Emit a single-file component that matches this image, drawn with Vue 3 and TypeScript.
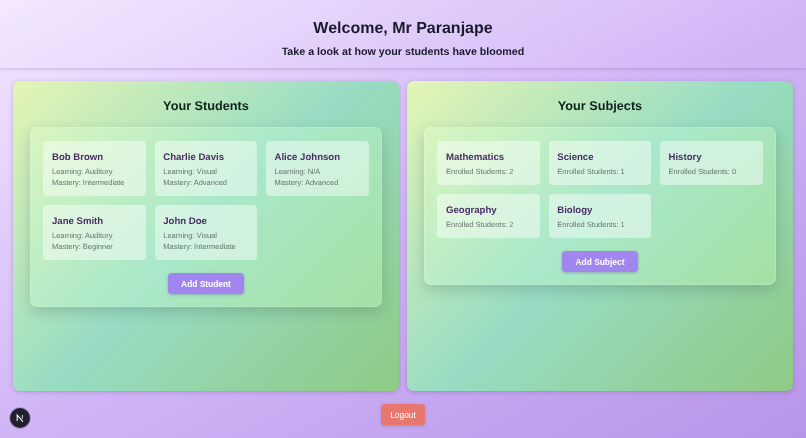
<script setup lang="ts">
const students = [
  { name: 'Bob Brown', learning: 'Auditory', mastery: 'Intermediate' },
  { name: 'Charlie Davis', learning: 'Visual', mastery: 'Advanced' },
  { name: 'Alice Johnson', learning: 'N/A', mastery: 'Advanced' },
  { name: 'Jane Smith', learning: 'Auditory', mastery: 'Beginner' },
  { name: 'John Doe', learning: 'Visual', mastery: 'Intermediate' },
]

const subjects = [
  { name: 'Mathematics', enrolled: 2 },
  { name: 'Science', enrolled: 1 },
  { name: 'History', enrolled: 0 },
  { name: 'Geography', enrolled: 2 },
  { name: 'Biology', enrolled: 1 },
]
</script>

<template>
  <div class="page">
    <header class="header">
      <h1>Welcome, Mr Paranjape</h1>
      <p>Take a look at how your students have bloomed</p>
    </header>

    <main class="columns">
      <section class="panel">
        <h2>Your Students</h2>
        <div class="glass">
          <div class="grid">
            <div v-for="s in students" :key="s.name" class="card">
              <h3>{{ s.name }}</h3>
              <p>Learning: {{ s.learning }}</p>
              <p>Mastery: {{ s.mastery }}</p>
            </div>
          </div>
          <button class="add">Add Student</button>
        </div>
      </section>

      <section class="panel">
        <h2>Your Subjects</h2>
        <div class="glass">
          <div class="grid">
            <div v-for="s in subjects" :key="s.name" class="card">
              <h3>{{ s.name }}</h3>
              <p>Enrolled Students: {{ s.enrolled }}</p>
            </div>
          </div>
          <button class="add">Add Subject</button>
        </div>
      </section>
    </main>

    <footer class="footer">
      <button class="logout">Logout</button>
    </footer>

    <div class="next-badge">
      <svg width="10" height="10" viewBox="0 0 12 12" fill="none">
        <path d="M2.6 9.6V2.4L9.4 10.4" stroke="#fff" stroke-width="1.3" />
        <path d="M8.8 2.4V7" stroke="#d8d8d8" stroke-width="1.2" />
      </svg>
    </div>
  </div>
</template>

<style>
html,
body {
  margin: 0;
}
</style>

<style scoped>
.page {
  position: relative;
  width: 806px;
  height: 438px;
  overflow: hidden;
  display: flex;
  flex-direction: column;
  background: linear-gradient(to bottom right, #f3e8ff 0%, #cfb3f6 52%, #b795e8 100%);
  font-family: 'Liberation Sans', Arial, sans-serif;
  text-rendering: geometricPrecision;
}

/* the reference is a soft, downscaled capture */
.header h1,
.header p,
.panel h2,
.card h3,
.card p,
.add,
.logout,
.next-badge svg {
  filter: blur(0.3px);
}

.header {
  height: 68px;
  box-sizing: border-box;
  padding-top: 19px;
  text-align: center;
  color: #1a1a2e;
  background: rgba(255, 255, 255, 0.05);
  box-shadow: 0 1px 3px rgba(90, 60, 130, 0.25);
}

.header h1 {
  margin: 0;
  font-size: 16px;
  line-height: 20px;
  font-weight: 700;
}

.header p {
  margin: 6px 0 0;
  font-size: 10.7px;
  line-height: 15px;
  font-weight: 700;
}

.columns {
  display: flex;
  gap: 8px;
  padding: 13px 13px 0;
  height: 323px;
  box-sizing: border-box;
}

.panel {
  flex: 1;
  box-sizing: border-box;
  padding: 17px 17px 0;
  border-radius: 7px;
  background: linear-gradient(135deg, #e4f5b4 0%, #97dcc3 50%, #8fca84 100%);
  box-shadow: 0 1px 4px rgba(80, 60, 120, 0.3);
}

.panel h2 {
  margin: 0 0 12px;
  height: 17px;
  font-size: 12.7px;
  line-height: 17px;
  font-weight: 700;
  text-align: center;
  color: #13231f;
}

.glass {
  box-sizing: border-box;
  padding: 13px 12.4px 12px;
  border-radius: 7px;
  border: 1px solid rgba(255, 255, 255, 0.16);
  background: linear-gradient(135deg, #d9f5bf 0%, #a9e8c9 50%, #a5e0a3 100%) border-box;
  box-shadow: 0 5px 14px rgba(40, 70, 70, 0.22);
  display: flex;
  flex-direction: column;
  align-items: center;
}

.grid {
  align-self: stretch;
  display: grid;
  grid-template-columns: repeat(3, 1fr);
  gap: 9px 8.6px;
}

.card {
  box-sizing: border-box;
  padding: 11px 8.6px 8px;
  border-radius: 4px;
  background: rgba(255, 255, 255, 0.46);
}

.card h3 {
  margin: 0 0 2px;
  font-size: 9.6px;
  line-height: 12px;
  font-weight: 700;
  color: #4a2d66;
}

.card p {
  margin: 0;
  font-size: 7.5px;
  line-height: 11px;
  color: #66746f;
}

.add {
  margin-top: 13px;
  height: 21px;
  width: 76px;
  padding: 0;
  border: 0;
  border-radius: 4px;
  background: #a286ef;
  color: #fff;
  font: 700 8.4px 'Liberation Sans', Arial, sans-serif;
  box-shadow: 0 1px 3px rgba(90, 70, 170, 0.35);
}

.footer {
  display: flex;
  justify-content: center;
  padding-top: 13px;
}

.logout {
  width: 44px;
  height: 21px;
  padding: 0;
  border: 0;
  border-radius: 4px;
  background: #e8776f;
  color: #fff;
  font: 400 8.4px 'Liberation Sans', Arial, sans-serif;
  box-shadow: 0 1px 3px rgba(120, 60, 90, 0.35);
}

.next-badge {
  position: absolute;
  left: 10px;
  top: 408px;
  width: 20px;
  height: 20px;
  border-radius: 50%;
  background: #221f2e;
  display: flex;
  align-items: center;
  justify-content: center;
  box-shadow: 0 0 0 1px rgba(60, 40, 90, 0.2);
}
</style>
